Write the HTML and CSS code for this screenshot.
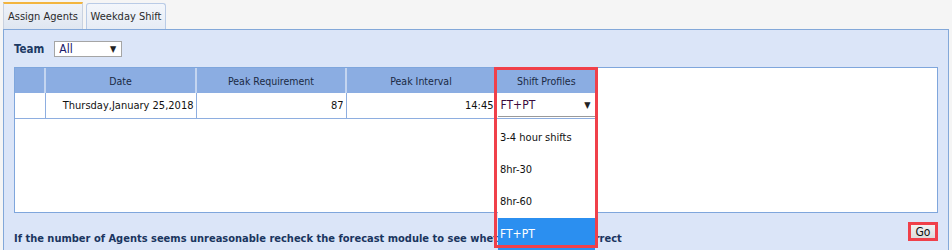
FILE: index.html
```html
<!DOCTYPE html>
<html>
<head>
<meta charset="utf-8">
<link rel="stylesheet" href="styles.css">
</head>
<body>
<div class="tabs">
  <div class="tab tab-active">Assign Agents</div>
  <div class="tab">Weekday Shift</div>
</div>
<div class="panel">
  <div class="team-row">
    <span class="team-label">Team</span>
    <div class="select team-select"><span>All</span><span class="arrow">&#9660;</span></div>
  </div>
  <div class="grid">
    <table class="grid-table">
      <thead>
        <tr>
          <th class="c-sel"></th>
          <th class="c-date">Date</th>
          <th class="c-req">Peak Requirement</th>
          <th class="c-int">Peak Interval</th>
          <th class="c-prof">Shift Profiles</th>
          <th class="c-fill"></th>
        </tr>
      </thead>
      <tbody>
        <tr>
          <td class="c-sel"></td>
          <td class="num">Thursday,January 25,2018</td>
          <td class="num">87</td>
          <td class="num">14:45</td>
          <td class="prof-cell"><div class="select prof-select"><span>FT+PT</span><span class="arrow">&#9660;</span></div></td>
          <td class="c-fill blank"></td>
        </tr>
      </tbody>
    </table>
    <ul class="dropdown">
      <li>3-4 hour shifts</li>
      <li>8hr-30</li>
      <li>8hr-60</li>
      <li class="selected">FT+PT</li>
    </ul>
    <div class="highlight-frame"></div>
  </div>
  <div class="footer">
    <p class="note">If the number of Agents seems unreasonable recheck the forecast module to see whether forecast is correct</p>
    <button class="go">Go</button>
  </div>
</div>
</body>
</html>
```
FILE: styles.css
```css
* { box-sizing: border-box; }
html, body { margin: 0; padding: 0; }
body {
  width: 952px;
  height: 250px;
  overflow: hidden;
  background: #f5f5f5;
  font-family: Tahoma, "DejaVu Sans Condensed", "Liberation Sans", sans-serif;
  font-size: 11px;
  color: #111;
}
.tabs {
  display: flex;
  gap: 3px;
  padding: 2px 0 0 3px;
  height: 29px;
  align-items: flex-end;
}
.tab {
  height: 26px;
  width: 80px;
  display: flex;
  align-items: center;
  justify-content: center;
  border: 1px solid #b9cbe6;
  border-bottom: none;
  border-radius: 3px 3px 0 0;
  background: linear-gradient(#f3f6fb, #e6ecf5);
  color: #2a2a2a;
}
.tab-active {
  height: 27px;
  border-color: #c9d2e0;
  border-top: 2px solid #f3b53e;
  background: linear-gradient(#eef2f8, #dfe6f1);
  border-radius: 0;
}
.panel {
  margin: 0 3px;
  height: 221px;
  border: 1px solid #83a8d9;
  border-bottom: none;
  background: #dbe5f8;
  padding: 10px 10px 0 10px;
}
.team-row {
  display: flex;
  align-items: center;
  gap: 10px;
  height: 17px;
}
.team-label {
  font-weight: bold;
  color: #1d3a64;
  font-size: 11.5px;
}
.select {
  display: flex;
  align-items: center;
  justify-content: space-between;
  background: #fff;
}
.team-select {
  width: 68px;
  height: 16px;
  border: 1px solid #a5a5a5;
  padding: 0 5px 0 4px;
  color: #1a1a6a;
  font-size: 12px;
}
.arrow {
  font-size: 9px;
  color: #222;
}
.grid {
  position: relative;
  margin-top: 10px;
  height: 146px;
  border: 1px solid #7fa6dc;
  background: #fff;
}
.grid-table {
  border-collapse: collapse;
  width: 100%;
  table-layout: fixed;
}
.grid-table th {
  height: 25px;
  background: #8badE2;
  font-weight: normal;
  color: #1a2a44;
  border-left: 2px solid #c4d5f0;
  padding: 0;
  font-size: 10.5px;
}
.grid-table th:first-child { border-left: none; }
.grid-table th.c-fill { background: #fff; border-left: 1px solid #fff; }
.c-sel { width: 30px; }
.c-date { width: 151px; }
.c-req { width: 150px; }
.c-int { width: 150px; }
.c-prof { width: 100px; }
.grid-table td {
  height: 25px;
  border: 1px solid #8eaee0;
  border-top: none;
  padding: 0 2px 0 0;
  font-size: 11px;
}
.grid-table td:first-child { border-left: none; }
.grid-table td.blank { border: none; }
.grid-table td.num { text-align: right; }
.grid-table td.prof-cell { padding: 0 1px; }
.prof-select {
  height: 24px;
  padding: 0 4px 0 3px;
  color: #3a0a3e;
  border-bottom: 1px solid #9a9a9a;
  font-size: 12px;
}
.dropdown {
  position: absolute;
  left: 483px;
  top: 54px;
  width: 97px;
  margin: 0;
  padding: 0;
  list-style: none;
  background: #fff;
  z-index: 2;
  font-size: 11px;
}
.dropdown li {
  height: 32px;
  line-height: 32px;
  padding-left: 2px;
  color: #111;
}
.dropdown li.selected {
  background: #2b8ff0;
  color: #fff;
  font-size: 12px;
}
.highlight-frame {
  position: absolute;
  left: 479px;
  top: -1px;
  width: 104px;
  height: 181px;
  border: 3px solid #f0404a;
  z-index: 3;
}
.footer {
  display: flex;
  align-items: flex-start;
  justify-content: space-between;
  margin-top: 9px;
}
.note {
  margin: 10px 0 0 0;
  font-weight: bold;
  color: #1a3560;
  font-size: 11px;
  line-height: 14px;
}
.go {
  font-family: inherit;
  font-size: 12px;
  width: 30px;
  height: 19px;
  padding: 0;
  border: 3px solid #f0404a;
  background: linear-gradient(#f2f2f2, #dcdcdc);
  color: #111;
}
```
